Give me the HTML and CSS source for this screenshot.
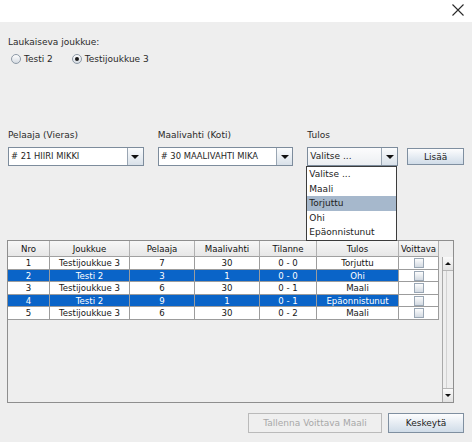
FILE: index.html
```html
<!DOCTYPE html>
<html lang="fi">
<head>
<meta charset="utf-8">
<title>Laukaisu</title>
<link rel="stylesheet" href="styles.css">
</head>
<body>
<div class="titlebar">
  <svg class="close" width="12" height="12" viewBox="0 0 12 12"><path d="M0.5 0.5L11.5 11.5M11.5 0.5L0.5 11.5" stroke="#2a2a2a" stroke-width="1.1" fill="none"/></svg>
</div>
<div class="main">
  <div class="section-label">Laukaiseva joukkue:</div>
  <div class="radio-row">
    <div class="radio"><span class="radio-dot"></span>Testi 2</div>
    <div class="radio"><span class="radio-dot checked"></span>Testijoukkue 3</div>
  </div>

  <div class="fields">
    <div class="field f-wide">
      <div class="field-label">Pelaaja (Vieras)</div>
      <div class="combo"><span class="combo-text"># 21 HIIRI MIKKI</span><span class="combo-btn"><span class="tri-down"></span></span></div>
    </div>
    <div class="field f-wide">
      <div class="field-label">Maalivahti (Koti)</div>
      <div class="combo"><span class="combo-text"># 30 MAALIVAHTI MIKA</span><span class="combo-btn"><span class="tri-down"></span></span></div>
    </div>
    <div class="field f-narrow">
      <div class="field-label">Tulos</div>
      <div class="combo combo-ro"><span class="combo-text combo-text-lg">Valitse ...</span><span class="combo-btn"><span class="tri-down"></span></span>
        <div class="popup">
          <div class="popup-item">Valitse ...</div>
          <div class="popup-item">Maali</div>
          <div class="popup-item sel">Torjuttu</div>
          <div class="popup-item">Ohi</div>
          <div class="popup-item">Epäonnistunut</div>
        </div>
      </div>
    </div>
    <button class="btn lisaa">Lisää</button>
  </div>

  <div class="pane">
    <div class="table">
      <div class="row">
        <div class="cell hdr">Nro</div>
        <div class="cell hdr">Joukkue</div>
        <div class="cell hdr">Pelaaja</div>
        <div class="cell hdr">Maalivahti</div>
        <div class="cell hdr">Tilanne</div>
        <div class="cell hdr">Tulos</div>
        <div class="cell hdr">Voittava</div>
      </div>
      <div class="row">
        <div class="cell">1</div><div class="cell">Testijoukkue 3</div><div class="cell">7</div><div class="cell">30</div><div class="cell">0 - 0</div><div class="cell">Torjuttu</div><div class="cell"><span class="chk"></span></div>
      </div>
      <div class="row sel">
        <div class="cell">2</div><div class="cell">Testi 2</div><div class="cell">3</div><div class="cell">1</div><div class="cell">0 - 0</div><div class="cell">Ohi</div><div class="cell chk-cell"><span class="chk"></span></div>
      </div>
      <div class="row">
        <div class="cell">3</div><div class="cell">Testijoukkue 3</div><div class="cell">6</div><div class="cell">30</div><div class="cell">0 - 1</div><div class="cell">Maali</div><div class="cell"><span class="chk"></span></div>
      </div>
      <div class="row sel">
        <div class="cell">4</div><div class="cell">Testi 2</div><div class="cell">9</div><div class="cell">1</div><div class="cell">0 - 1</div><div class="cell">Epäonnistunut</div><div class="cell chk-cell"><span class="chk"></span></div>
      </div>
      <div class="row">
        <div class="cell">5</div><div class="cell">Testijoukkue 3</div><div class="cell">6</div><div class="cell">30</div><div class="cell">0 - 2</div><div class="cell">Maali</div><div class="cell"><span class="chk"></span></div>
      </div>
    </div>
    <div class="vcol">
      <div class="corner"></div>
      <div class="vscroll">
        <div class="sb-btn up"><span class="tri-up"></span></div>
        <div class="sb-track"></div>
        <div class="sb-btn down"><span class="tri-down small"></span></div>
      </div>
    </div>
  </div>

  <div class="actions">
    <button class="btn btn-disabled" disabled>Tallenna Voittava Maali</button>
    <button class="btn btn-cancel">Keskeytä</button>
  </div>
</div>
</body>
</html>
```

FILE: styles.css
```css
* { box-sizing: border-box; }
html, body { margin: 0; padding: 0; }
body {
  width: 472px;
  height: 442px;
  overflow: hidden;
  background: #eeeeee;
  font-family: "DejaVu Sans", sans-serif;
  font-size: 9px;
  color: #222;
}
.titlebar {
  height: 22px;
  background: #ffffff;
  display: flex;
  justify-content: flex-end;
  align-items: flex-start;
  padding: 4px 8px 0 0;
}
.close { display: block; }

.main { padding: 0 8px; }

.section-label {
  margin-top: 14px;
  height: 12px;
  line-height: 12px;
  color: #2a2a2a;
}
.radio-row {
  display: flex;
  gap: 19px;
  margin-top: 4px;
  height: 14px;
  align-items: center;
  padding-left: 3px;
}
.radio {
  display: flex;
  align-items: center;
  gap: 3px;
  line-height: 12px;
  color: #2a2a2a;
}
.radio-dot {
  width: 10px;
  height: 10px;
  border-radius: 50%;
  border: 1px solid #8d99a6;
  background: linear-gradient(#fdfdfd, #d5dbe2);
  display: flex;
  align-items: center;
  justify-content: center;
}
.radio-dot.checked::after {
  content: "";
  width: 4px;
  height: 4px;
  border-radius: 50%;
  background: #1a1a1a;
}

.fields {
  display: flex;
  align-items: flex-end;
  margin-top: 63px;
}
.field { display: flex; flex-direction: column; }
.field + .field { margin-left: 14px; }
.f-wide { width: 136px; }
.f-narrow { width: 91px; }
.field-label {
  height: 12px;
  line-height: 12px;
  margin-bottom: 6px;
  color: #2a2a2a;
}
.combo {
  position: relative;
  height: 19px;
  border: 1px solid #7d8c9c;
  background: #ffffff;
  display: flex;
}
.combo-ro { background: linear-gradient(#fcfcfd, #eceff2); }
.combo-text {
  flex: 1;
  padding-left: 2px;
  line-height: 17px;
  font-size: 8.4px;
  white-space: nowrap;
  overflow: hidden;
  color: #1e1e1e;
}
.combo-text-lg { font-size: 9px; }
.combo-btn {
  width: 16px;
  border-left: 1px solid #9aa6b3;
  background: linear-gradient(#fbfcfd, #d9e1e9);
  display: flex;
  align-items: center;
  justify-content: center;
}
.tri-down {
  width: 0;
  height: 0;
  border-left: 4px solid transparent;
  border-right: 4px solid transparent;
  border-top: 4px solid #111;
}
.tri-down.small {
  border-left-width: 3px;
  border-right-width: 3px;
  border-top-width: 3px;
}
.tri-up {
  width: 0;
  height: 0;
  border-left: 3px solid transparent;
  border-right: 3px solid transparent;
  border-bottom: 3px solid #111;
}

.popup {
  position: absolute;
  left: -2px;
  top: calc(100% + 1px);
  width: 91px;
  background: #ffffff;
  border: 1px solid #3c3c3c;
  z-index: 5;
}
.popup-item {
  height: 14.6px;
  line-height: 14.6px;
  padding-left: 2px;
  white-space: nowrap;
  color: #222;
}
.popup-item.sel { background: #a6b8cc; }

.btn {
  font-family: "DejaVu Sans", sans-serif;
  font-size: 9px;
  color: #222;
  border: 1px solid #7f8fa0;
  background: linear-gradient(#fdfdfe, #d0dce8);
  padding: 0;
}
.lisaa {
  width: 57px;
  height: 17px;
  margin-left: 9px;
  margin-bottom: 1px;
}

.pane {
  margin-top: 74px;
  margin-left: -1px;
  width: 447px;
  height: 163px;
  border: 1px solid #8e8e8e;
  background: #eeeeee;
  display: flex;
}
.table {
  display: grid;
  grid-template-columns: 42px 80px 65px 65px 57px 82px 40px;
  grid-template-rows: 16px 13px 12px 13px 12px 13px;
  align-self: flex-start;
  font-size: 8.6px;
}
.row { display: contents; }
.cell {
  border-right: 1px solid #9c9c9c;
  border-bottom: 1px solid #9c9c9c;
  background: #ffffff;
  color: #151515;
  display: flex;
  align-items: center;
  justify-content: center;
  white-space: nowrap;
}
.hdr {
  background: linear-gradient(#f7f7f7, #e7e7e7);
  border-right-color: #b0b0b0;
  border-bottom-color: #a0a0a0;
  color: #111;
}
.row.sel .cell {
  background: #0a64c8;
  color: #ffffff;
}
.row.sel .chk-cell { background: #ffffff; }
.chk {
  width: 10px;
  height: 10px;
  border: 1px solid #9aa7b5;
  background: linear-gradient(#fdfdfd, #d3dae2);
}

.vcol {
  flex: 1;
  display: flex;
  flex-direction: column;
}
.corner { height: 16px; }
.vscroll {
  flex: 1;
  margin-left: 3px;
  border-left: 1px solid #a9a9a9;
  display: flex;
  flex-direction: column;
  background: #eeeeee;
}
.sb-btn {
  height: 14px;
  display: flex;
  align-items: center;
  justify-content: center;
  background: linear-gradient(#fafafa, #e2e2e2);
}
.sb-btn.up { border-bottom: 1px solid #b5b5b5; }
.sb-btn.down { border-top: 1px solid #b5b5b5; }
.sb-track {
  flex: 1;
  margin-left: 3px;
  border-left: 1px solid #d2d2d2;
}

.actions {
  display: flex;
  justify-content: flex-end;
  gap: 6px;
  margin-top: 10px;
}
.btn-disabled {
  width: 134px;
  height: 20px;
  background: #efefef;
  border-color: #bababa;
  color: #a8a8a8;
}
.btn-cancel {
  width: 76px;
  height: 20px;
}
```
